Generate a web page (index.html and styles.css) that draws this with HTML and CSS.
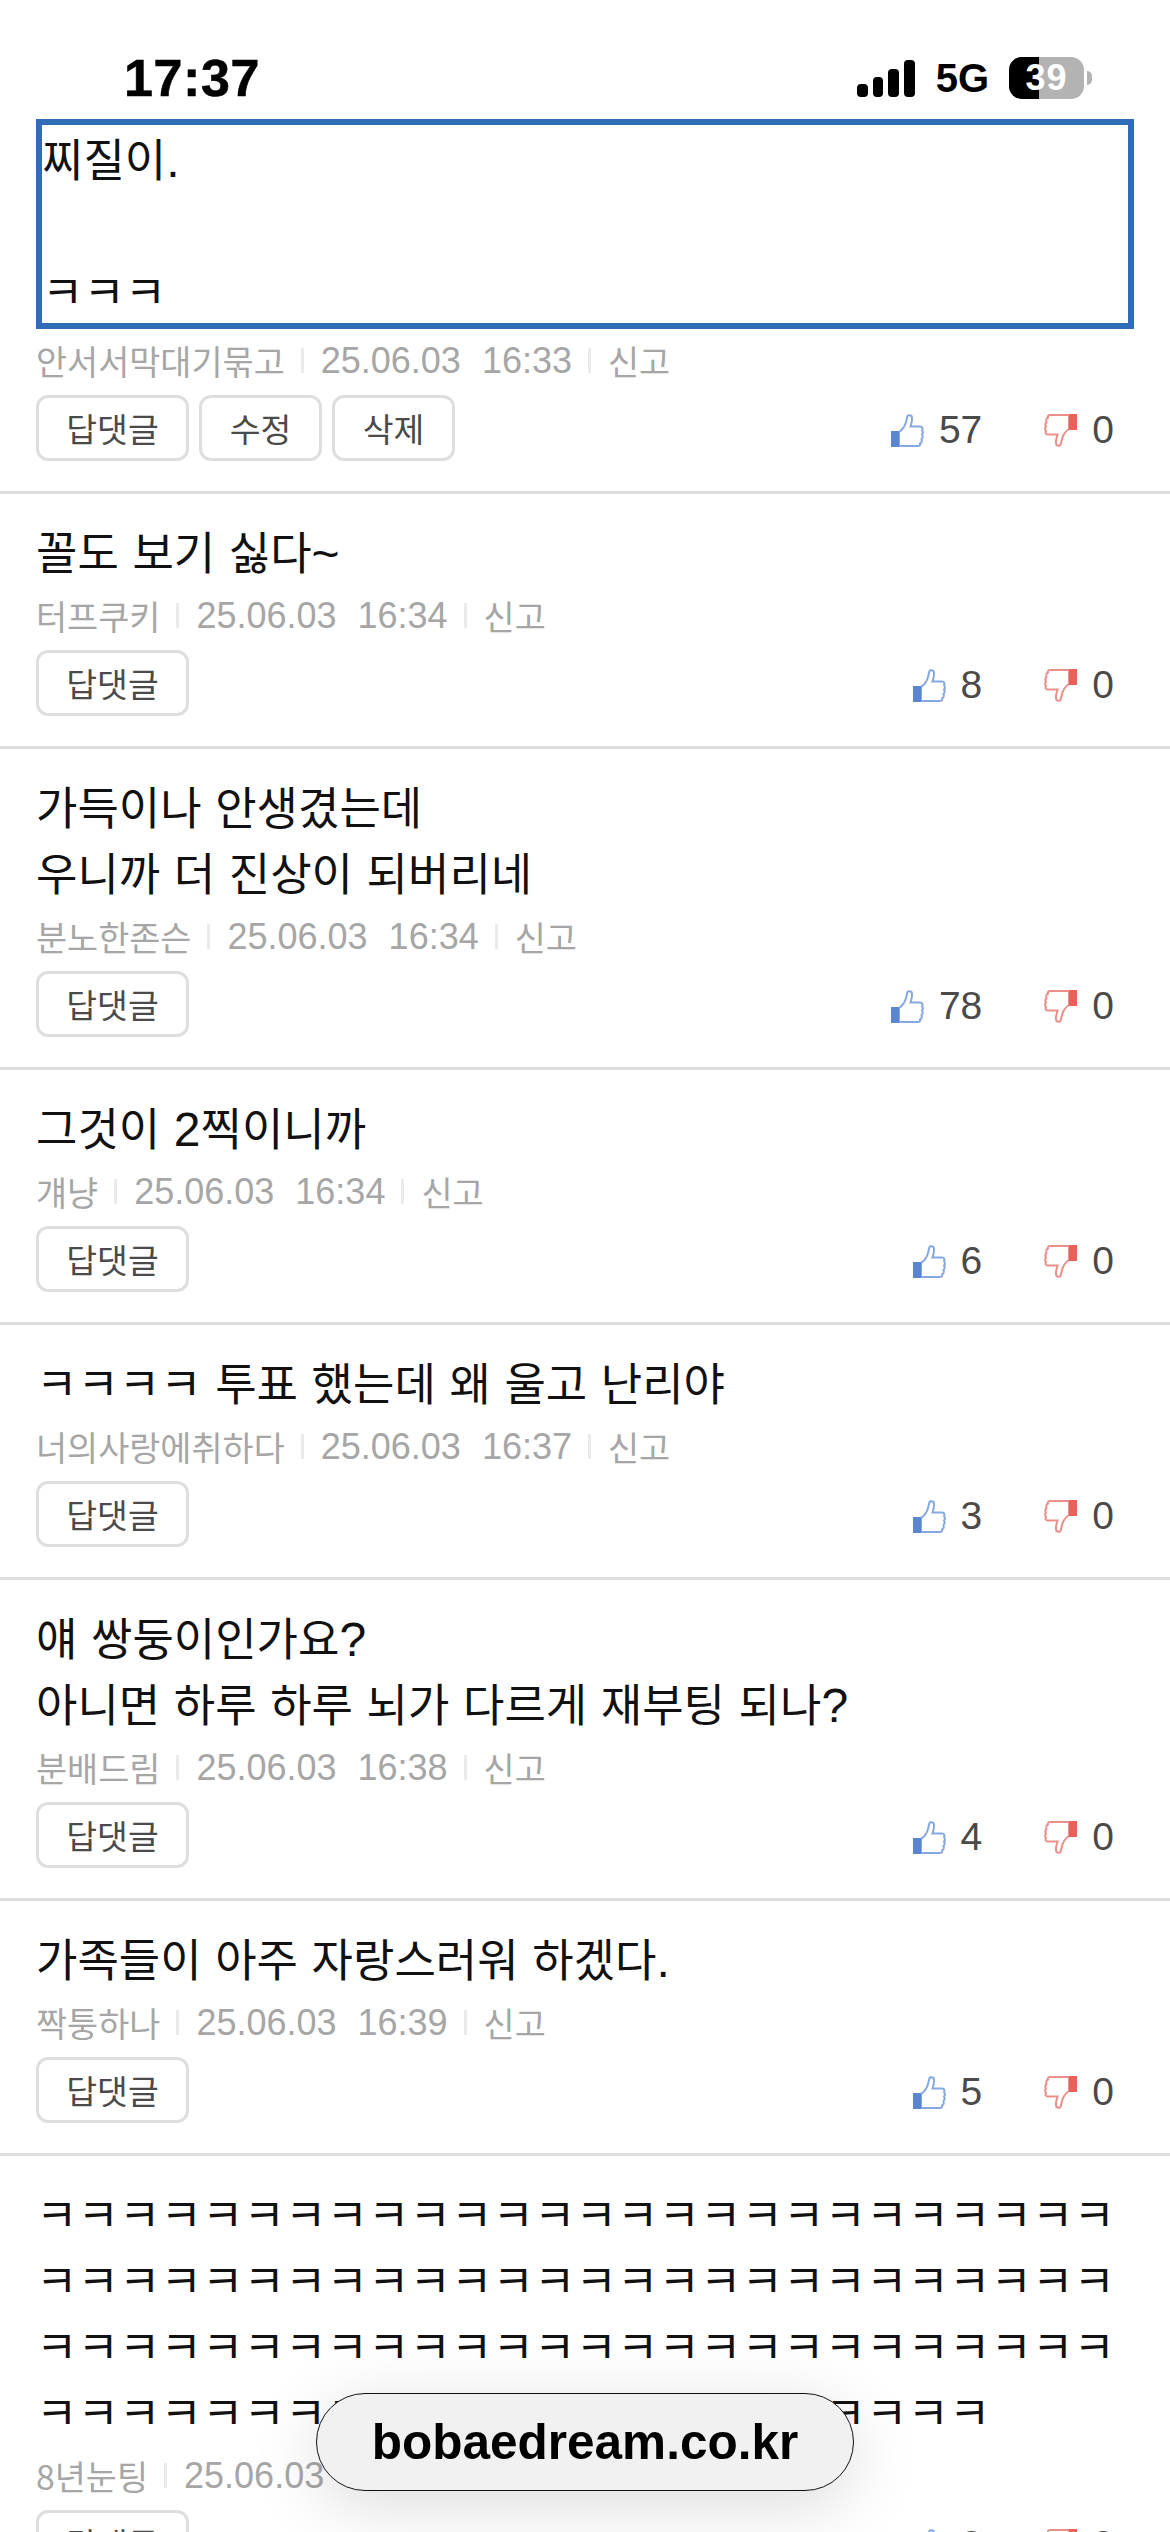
FILE: index.html
```html
<!DOCTYPE html>
<html lang="ko">
<head>
<meta charset="utf-8">
<title>보배드림 댓글</title>
<link rel="stylesheet" href="styles.css">
</head>
<body>
<svg class="defs" width="0" height="0" aria-hidden="true">
  <symbol id="thumb" viewBox="0 0 33 33">
    <path class="thumb-line" d="M8 18 C11 16 14 12 15 8 L16.5 2 C17 1 19.5 1 20.5 2 C21.5 4 21 8 19.5 12.5 L29 12.5 C31.5 12.5 32 14.5 31 16 C32 17.5 32 19.5 31 20.5 C32 22 31.5 24 30.5 25 C31 27 30.5 29 29 29.5 C29.5 31 28.5 32 27 32 L8 32 Z"/>
    <rect class="thumb-cuff" x="0" y="17" width="8" height="16"/>
  </symbol>
</svg>
<header class="status">
  <span class="time">17:37</span>
  <div class="status-right">
    <svg class="signal" viewBox="0 0 58 37" width="58" height="37"><rect x="0" y="24" width="11" height="13" rx="4"/><rect x="16" y="17" width="10" height="20" rx="4"/><rect x="31" y="9" width="11" height="28" rx="4"/><rect x="47" y="0" width="11" height="37" rx="4"/></svg>
    <span class="network">5G</span>
    <div class="battery"><div class="battery-body"><div class="battery-fill"></div><span class="battery-num">39</span></div><div class="battery-tip"></div></div>
  </div>
</header>
<main>
  <article class="row row-first">
    <div class="text selected">찌질이<span class="latin">.</span><br><br>ㅋㅋㅋ</div>
    <div class="meta"><span>안서서막대기묶고</span><i></i><span class="num">25.06.03</span><span class="num clock">16:33</span><i></i><span>신고</span></div>
    <div class="actions">
      <div class="btns"><button class="btn">답댓글</button><button class="btn btn-short">수정</button><button class="btn btn-short">삭제</button></div>
      <div class="votes"><svg class="up"><use href="#thumb"/></svg><span class="count">57</span><svg class="down"><use href="#thumb"/></svg><span class="count">0</span></div>
    </div>
  </article>
  <article class="row">
    <div class="text">꼴도 보기 싫다<span class="latin">~</span></div>
    <div class="meta"><span>터프쿠키</span><i></i><span class="num">25.06.03</span><span class="num clock">16:34</span><i></i><span>신고</span></div>
    <div class="actions">
      <div class="btns"><button class="btn">답댓글</button></div>
      <div class="votes"><svg class="up"><use href="#thumb"/></svg><span class="count">8</span><svg class="down"><use href="#thumb"/></svg><span class="count">0</span></div>
    </div>
  </article>
  <article class="row">
    <div class="text">가득이나 안생겼는데<br>우니까 더 진상이 되버리네</div>
    <div class="meta"><span>분노한존슨</span><i></i><span class="num">25.06.03</span><span class="num clock">16:34</span><i></i><span>신고</span></div>
    <div class="actions">
      <div class="btns"><button class="btn">답댓글</button></div>
      <div class="votes"><svg class="up"><use href="#thumb"/></svg><span class="count">78</span><svg class="down"><use href="#thumb"/></svg><span class="count">0</span></div>
    </div>
  </article>
  <article class="row">
    <div class="text">그것이 <span class="latin">2</span>찍이니까</div>
    <div class="meta"><span>걔냥</span><i></i><span class="num">25.06.03</span><span class="num clock">16:34</span><i></i><span>신고</span></div>
    <div class="actions">
      <div class="btns"><button class="btn">답댓글</button></div>
      <div class="votes"><svg class="up"><use href="#thumb"/></svg><span class="count">6</span><svg class="down"><use href="#thumb"/></svg><span class="count">0</span></div>
    </div>
  </article>
  <article class="row">
    <div class="text">ㅋㅋㅋㅋ 투표 했는데 왜 울고 난리야</div>
    <div class="meta"><span>너의사랑에취하다</span><i></i><span class="num">25.06.03</span><span class="num clock">16:37</span><i></i><span>신고</span></div>
    <div class="actions">
      <div class="btns"><button class="btn">답댓글</button></div>
      <div class="votes"><svg class="up"><use href="#thumb"/></svg><span class="count">3</span><svg class="down"><use href="#thumb"/></svg><span class="count">0</span></div>
    </div>
  </article>
  <article class="row">
    <div class="text">얘 쌍둥이인가요<span class="latin">?</span><br>아니면 하루 하루 뇌가 다르게 재부팅 되나<span class="latin">?</span></div>
    <div class="meta"><span>분배드림</span><i></i><span class="num">25.06.03</span><span class="num clock">16:38</span><i></i><span>신고</span></div>
    <div class="actions">
      <div class="btns"><button class="btn">답댓글</button></div>
      <div class="votes"><svg class="up"><use href="#thumb"/></svg><span class="count">4</span><svg class="down"><use href="#thumb"/></svg><span class="count">0</span></div>
    </div>
  </article>
  <article class="row">
    <div class="text">가족들이 아주 자랑스러워 하겠다<span class="latin">.</span></div>
    <div class="meta"><span>짝퉁하나</span><i></i><span class="num">25.06.03</span><span class="num clock">16:39</span><i></i><span>신고</span></div>
    <div class="actions">
      <div class="btns"><button class="btn">답댓글</button></div>
      <div class="votes"><svg class="up"><use href="#thumb"/></svg><span class="count">5</span><svg class="down"><use href="#thumb"/></svg><span class="count">0</span></div>
    </div>
  </article>
  <article class="row">
    <div class="text text-run">ㅋㅋㅋㅋㅋㅋㅋㅋㅋㅋㅋㅋㅋㅋㅋㅋㅋㅋㅋㅋㅋㅋㅋㅋㅋㅋ<br>ㅋㅋㅋㅋㅋㅋㅋㅋㅋㅋㅋㅋㅋㅋㅋㅋㅋㅋㅋㅋㅋㅋㅋㅋㅋㅋ<br>ㅋㅋㅋㅋㅋㅋㅋㅋㅋㅋㅋㅋㅋㅋㅋㅋㅋㅋㅋㅋㅋㅋㅋㅋㅋㅋ<br>ㅋㅋㅋㅋㅋㅋㅋㅋㅋㅋㅋㅋㅋㅋㅋㅋㅋㅋㅋㅋㅋㅋㅋ</div>
    <div class="meta"><span>8년눈팅</span><i></i><span class="num">25.06.03</span></div>
    <div class="actions">
      <div class="btns"><button class="btn">답댓글</button></div>
      <div class="votes"><svg class="up"><use href="#thumb"/></svg><span class="count">2</span><svg class="down"><use href="#thumb"/></svg><span class="count">0</span></div>
    </div>
  </article>
</main>
<div class="url-pill">bobaedream.co.kr</div>
</body>
</html>
```
FILE: styles.css
```css
* { box-sizing: border-box; }
html, body { margin: 0; height: 2532px; overflow: hidden; background: #fff; }
body { font-family: "Noto Sans CJK KR", "Liberation Sans", sans-serif; color: #111; }
.defs { position: absolute; }

.status { height: 119px; display: flex; justify-content: space-between; align-items: flex-start; padding: 50px 78px 0 124px; }
.time { font: 700 52px/56px "Liberation Sans", sans-serif; letter-spacing: .6px; color: #000; -webkit-text-stroke: .6px #000; }
.status-right { display: flex; align-items: center; gap: 21px; height: 56px; }
.signal { fill: #000; display: block; }
.network { font: 700 40px/42px "Liberation Sans", sans-serif; color: #000; }
.battery { display: flex; align-items: center; margin-left: -1px; }
.battery-body { position: relative; width: 75px; height: 42px; border-radius: 13px; background: #b3b3b3; overflow: hidden; }
.battery-fill { width: 30px; height: 42px; background: #000; }
.battery-num { position: absolute; left: 0; right: 0; top: 0; text-align: center; font: 700 36px/42px "Liberation Sans", sans-serif; letter-spacing: 1px; color: #fff; }
.battery-tip { width: 5px; height: 14px; margin-left: 3px; background: #b3b3b3; border-radius: 0 5px 5px 0; }

.row { padding: 24px 36px 30px; border-top: 3px solid #dedede; }
.row-first { padding-top: 0; border-top: 0; }
.text { font-size: 45px; line-height: 66px; word-spacing: 1px; color: #111; white-space: nowrap; }
.text-run { letter-spacing: .1px; }
.latin { font-family: "Liberation Sans", sans-serif; font-size: 48px; line-height: 0; }
.selected { border: 6px solid #2f6db5; }

.meta { display: flex; align-items: center; height: 46px; margin-top: 8px; font-size: 33.8px; color: #a6a6a6; }
.meta i { width: 3px; height: 25px; margin: 0 17px 0 16px; background: #eaeaea; }
.num { font: 36px/46px "Liberation Sans", sans-serif; padding-top: 2px; }
.clock { margin-left: 21px; }

.actions { display: flex; justify-content: space-between; align-items: center; margin-top: 12px; }
.btns { display: flex; gap: 10px; }
.btn { width: 153px; height: 66px; padding: 0; border: 3px solid #dedede; border-radius: 12px; background: #fff; font: 33.5px/58px "Noto Sans CJK KR", sans-serif; color: #4a4a4a; }
.btn-short { width: 123px; }

.votes { display: flex; align-items: center; padding: 4px 20px 0 0; }
.votes svg { width: 33px; height: 33px; display: block; flex: none; }
.up { color: #5a86d0; --line: #86a8e0; }
.down { color: #e8625a; --line: #ec8f8a; transform: rotate(180deg); margin-left: 62px; }
.thumb-cuff { fill: currentColor; }
.thumb-line { fill: #fff; stroke: var(--line); stroke-width: 2; }
.count { font: 39px/46px "Liberation Sans", sans-serif; color: #4a4a4a; margin-left: 15px; }

.url-pill { position: absolute; left: 316px; top: 2393px; width: 538px; height: 98px; display: flex; align-items: center; justify-content: center; border: 1.5px solid #111; border-radius: 49px; background: #f1f1f1; font: 700 49.5px/1 "Liberation Sans", sans-serif; color: #000; box-shadow: 0 14px 70px rgba(0,0,0,.14); }
```
